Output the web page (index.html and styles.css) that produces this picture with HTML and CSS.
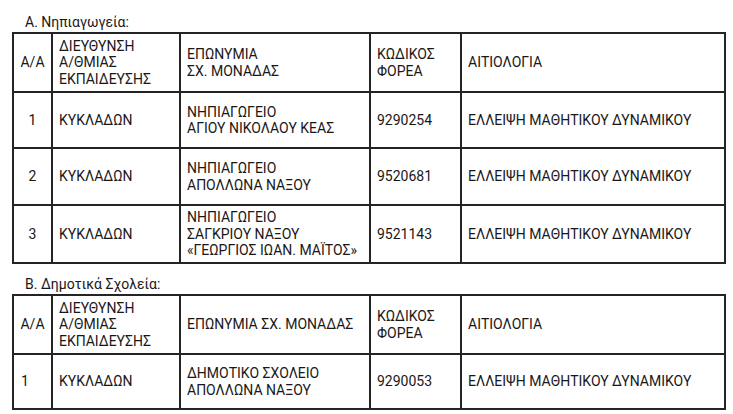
FILE: index.html
```html
<!DOCTYPE html>
<html lang="el">
<head>
<meta charset="utf-8">
<title>Καταργήσεις σχολικών μονάδων</title>
<link rel="stylesheet" href="styles.css">
</head>
<body>
<div class="page">
  <div class="section-title first">Α. Νηπιαγωγεία:</div>
  <table class="grid">
    <colgroup>
      <col class="c1"><col class="c2"><col class="c3"><col class="c4"><col class="c5">
    </colgroup>
    <tr class="head">
      <td class="num">Α/Α</td>
      <td>ΔΙΕΥΘΥΝΣΗ<br>Α/ΘΜΙΑΣ<br>ΕΚΠΑΙΔΕΥΣΗΣ</td>
      <td>ΕΠΩΝΥΜΙΑ<br>ΣΧ. ΜΟΝΑΔΑΣ</td>
      <td>ΚΩΔΙΚΟΣ<br>ΦΟΡΕΑ</td>
      <td>ΑΙΤΙΟΛΟΓΙΑ</td>
    </tr>
    <tr class="r1">
      <td class="num">1</td>
      <td>ΚΥΚΛΑΔΩΝ</td>
      <td>ΝΗΠΙΑΓΩΓΕΙΟ<br>ΑΓΙΟΥ ΝΙΚΟΛΑΟΥ ΚΕΑΣ</td>
      <td>9290254</td>
      <td>ΕΛΛΕΙΨΗ ΜΑΘΗΤΙΚΟΥ ΔΥΝΑΜΙΚΟΥ</td>
    </tr>
    <tr class="r2">
      <td class="num">2</td>
      <td>ΚΥΚΛΑΔΩΝ</td>
      <td>ΝΗΠΙΑΓΩΓΕΙΟ<br>ΑΠΟΛΛΩΝΑ ΝΑΞΟΥ</td>
      <td>9520681</td>
      <td>ΕΛΛΕΙΨΗ ΜΑΘΗΤΙΚΟΥ ΔΥΝΑΜΙΚΟΥ</td>
    </tr>
    <tr class="r3">
      <td class="num">3</td>
      <td>ΚΥΚΛΑΔΩΝ</td>
      <td>ΝΗΠΙΑΓΩΓΕΙΟ<br>ΣΑΓΚΡΙΟΥ ΝΑΞΟΥ<br>«ΓΕΩΡΓΙΟΣ ΙΩΑΝ. ΜΑΪΤΟΣ»</td>
      <td>9521143</td>
      <td>ΕΛΛΕΙΨΗ ΜΑΘΗΤΙΚΟΥ ΔΥΝΑΜΙΚΟΥ</td>
    </tr>
  </table>

  <div class="section-title second">Β. Δημοτικά Σχολεία:</div>
  <table class="grid">
    <colgroup>
      <col class="c1"><col class="c2"><col class="c3"><col class="c4"><col class="c5">
    </colgroup>
    <tr class="head">
      <td class="num">Α/Α</td>
      <td>ΔΙΕΥΘΥΝΣΗ<br>Α/ΘΜΙΑΣ<br>ΕΚΠΑΙΔΕΥΣΗΣ</td>
      <td>ΕΠΩΝΥΜΙΑ ΣΧ. ΜΟΝΑΔΑΣ</td>
      <td>ΚΩΔΙΚΟΣ<br>ΦΟΡΕΑ</td>
      <td>ΑΙΤΙΟΛΟΓΙΑ</td>
    </tr>
    <tr class="rb1">
      <td class="left-num">1</td>
      <td>ΚΥΚΛΑΔΩΝ</td>
      <td>ΔΗΜΟΤΙΚΟ ΣΧΟΛΕΙΟ<br>ΑΠΟΛΛΩΝΑ ΝΑΞΟΥ</td>
      <td>9290053</td>
      <td>ΕΛΛΕΙΨΗ ΜΑΘΗΤΙΚΟΥ ΔΥΝΑΜΙΚΟΥ</td>
    </tr>
  </table>
</div>
</body>
</html>
```

FILE: styles.css
```css
html, body {
  margin: 0;
  padding: 0;
  background: #ffffff;
}

body {
  font-family: Roboto, "Noto Sans", sans-serif;
  font-size: 14px;
  color: #1a1718;
}

.page {
  padding: 0 0 0 12px;
}

.section-title {
  padding-left: 13px;
  line-height: 18px;
  font-size: 14px;
}

.section-title.first {
  padding-top: 13px;
  height: 19px;
}

.section-title.second {
  padding-top: 11px;
  height: 19px;
}

.grid {
  border-collapse: collapse;
  table-layout: fixed;
  width: 712px;
}

.grid td {
  border: 2px solid #262324;
  padding: 0 5px 0 6px;
  vertical-align: middle;
  line-height: 16.5px;
  text-align: left;
  white-space: nowrap;
}

.grid td.num {
  padding: 0;
  text-align: center;
}

.grid td.left-num {
  padding-left: 7px;
}

.c1 { width: 39px; }
.c2 { width: 128px; }
.c3 { width: 190px; }
.c4 { width: 91px; }
.c5 { width: 264px; }

.head { height: 59px; }
.r1 { height: 56px; }
.r2 { height: 57px; }
.r3 { height: 58px; }
.rb1 { height: 55px; }
```
